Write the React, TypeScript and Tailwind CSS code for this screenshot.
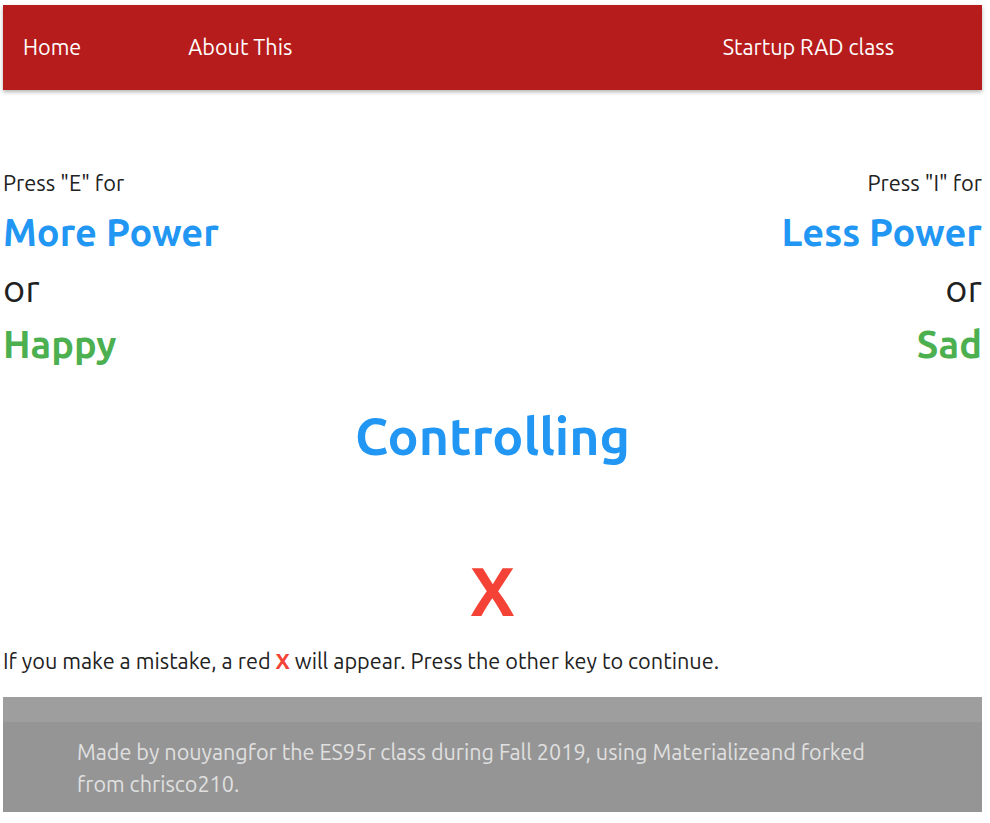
const font = { fontFamily: "Ubuntu, 'Noto Sans', sans-serif" };

const links = [
  { label: "Home", cls: "ml-[20px]" },
  { label: "About This", cls: "ml-[107px]" },
];

export default function App() {
  return (
    <div className="min-h-[823px] bg-white pl-[3px] pr-[8px] text-[#212121]" style={font}>
      <nav className="mt-[5px] flex h-[85px] items-center bg-[#b71c1c] text-[21.6px] text-white shadow-[0_2px_4px_rgba(0,0,0,0.3)]">
        {links.map((l) => (
          <a key={l.label} className={l.cls}>
            {l.label}
          </a>
        ))}
        <a className="ml-auto mr-[88px]">Startup RAD class</a>
      </nav>

      <div className="mt-[75px] flex justify-between">
        <div className="flex flex-col items-start">
          <span className="text-[21.8px] leading-[36px]">Press "E" for</span>
          <span className="mt-[3px] text-[38px] font-bold leading-[56px] text-[#2196f3]">More Power</span>
          <span className="text-[38px] leading-[56px]">or</span>
          <span className="text-[38px] font-bold leading-[56px] text-[#4caf50]">Happy</span>
        </div>
        <div className="flex flex-col items-end">
          <span className="text-[21.8px] leading-[36px]">Press "I" for</span>
          <span className="mt-[3px] text-[38px] font-bold leading-[56px] text-[#2196f3]">Less Power</span>
          <span className="text-[38px] leading-[56px]">or</span>
          <span className="text-[38px] font-bold leading-[56px] text-[#4caf50]">Sad</span>
        </div>
      </div>

      <div className="mt-[32px] text-center text-[51.8px] font-bold leading-[64px] text-[#2196f3]">Controlling</div>

      <div className="mt-[83px] text-center text-[68px] font-bold leading-[80px] text-[#f44336]">X</div>

      <p className="mt-[15px] text-[21.7px] leading-[30px]">
        If you make a mistake, a red <b className="text-[#f44336]">X</b> will appear. Press the other key to continue.
      </p>

      <footer className="mt-[21px] bg-[#959595]">
        <div className="h-[25px] bg-[#9e9e9e]" />
        <div className="w-[870px] pb-[12px] pl-[74px] pt-[14px] text-[21.6px] leading-[32px] text-[#e0e0e0]">
          Made by nouyangfor the ES95r class during Fall 2019, using Materializeand forked from chrisco210.
        </div>
      </footer>
    </div>
  );
}
